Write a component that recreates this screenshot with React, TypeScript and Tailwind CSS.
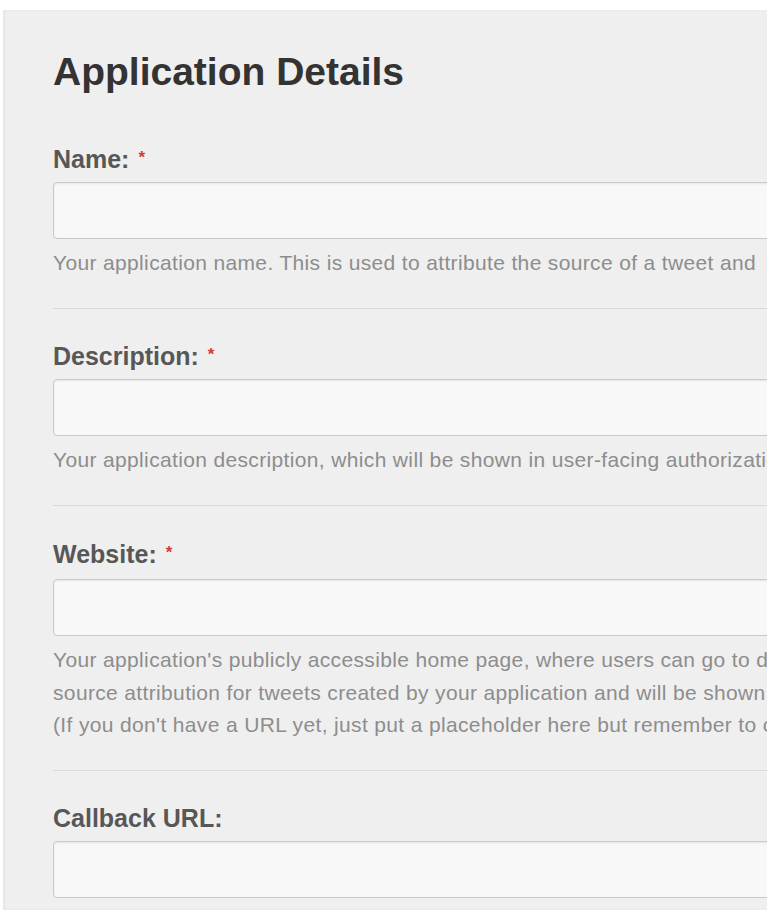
import React from "react";

const font = { fontFamily: '"Liberation Sans", Arial, Helvetica, sans-serif' };

function Label({ text, required }: { text: string; required?: boolean }) {
  return (
    <div className="flex items-start whitespace-nowrap text-[25px] font-bold leading-[25px] text-[#575757]">
      <span>{text}</span>
      {required && (
        <span className="ml-[9px] mt-[2px] text-[17px] leading-[17px] text-[#d23b3b]">*</span>
      )}
    </div>
  );
}

function Input({ top = "mt-[10px]" }: { top?: string }) {
  return (
    <div
      className={`${top} h-[57px] w-[760px] rounded-[4px] border border-[#c9c9c9] bg-[#f8f8f8] shadow-[inset_0_1px_2px_rgba(0,0,0,0.08)]`}
    />
  );
}

function Help({ lines }: { lines: string[] }) {
  return (
    <div className="mt-[8px] text-[21px] leading-[32px] tracking-[0.35px] text-[#8d8d8d]">
      {lines.map((l, i) => (
        <div key={i} className="whitespace-nowrap">
          {l}
        </div>
      ))}
    </div>
  );
}

function Divider() {
  return <div className="mt-[29px] h-px w-[760px] bg-[#d9d9d9]" />;
}

export default function App() {
  return (
    <div className="min-h-[916px] w-[770px] bg-white pt-[10px] pl-[3px]" style={font}>
      <div className="h-[900px] w-[764px] overflow-hidden bg-[#efefef] pl-[50px] pt-[42px] shadow-[inset_2px_0_3px_rgba(0,0,0,0.04)]">
        <h1 className="whitespace-nowrap text-[39px] font-bold leading-[39px] text-[#333333]">
          Application Details
        </h1>

        <div className="mt-[56px]">
          <Label text="Name:" required />
          <Input />
          <Help lines={["Your application name. This is used to attribute the source of a tweet and"]} />
          <Divider />
        </div>

        <div className="mt-[35px]">
          <Label text="Description:" required />
          <Input />
          <Help
            lines={[
              "Your application description, which will be shown in user-facing authorization screens.",
            ]}
          />
          <Divider />
        </div>

        <div className="mt-[36px]">
          <Label text="Website:" required />
          <Input top="mt-[12px]" />
          <div className="mt-[8px] text-[21px] leading-[32.5px] tracking-[0.35px] text-[#8d8d8d]">
            <div className="whitespace-nowrap">
              Your application's publicly accessible home page, where users can go to download,
            </div>
            <div className="whitespace-nowrap">
              source attribution for tweets created by your application and will be shown
            </div>
            <div className="whitespace-nowrap">
              (If you don't have a URL yet, just put a placeholder here but remember to change it later.)
            </div>
          </div>
          <div className="mt-[28px] h-px w-[760px] bg-[#d9d9d9]" />
        </div>

        <div className="mt-[35px]">
          <Label text="Callback URL:" />
          <Input />
        </div>
      </div>
    </div>
  );
}
